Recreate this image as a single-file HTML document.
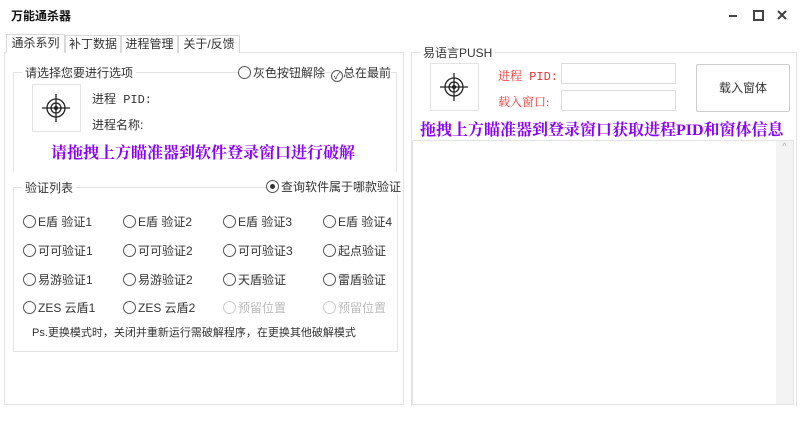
<!DOCTYPE html>
<html><head><meta charset="utf-8"><style>
*{margin:0;padding:0;box-sizing:border-box}
body{width:800px;height:432px;background:#fff;position:relative;overflow:hidden;font-family:"Liberation Sans","Noto Sans CJK SC",sans-serif;font-size:12px;color:#222}
.a{position:absolute;white-space:nowrap}
.box{position:absolute;border:1px solid #e3e3e3}
.tab{position:absolute;top:35px;height:18px;border:1px solid #d9d9d9;border-bottom:none;background:#fff;font-size:12px;line-height:16px;text-align:center;color:#333}
.lg{position:absolute;background:#fff;padding:0 3px;font-size:12px;color:#333}
.r{position:absolute;font-size:12px;color:#333;white-space:nowrap;line-height:14px}
.r:before{content:"";display:inline-block;width:11px;height:11px;border:1px solid #555;border-radius:50%;vertical-align:-2px;margin-right:2px}
.r.d{color:#bbb}.r.d:before{border-color:#ccc}
.p{position:absolute;font-family:"Liberation Serif","Noto Serif CJK SC",serif;font-weight:bold;color:#8a00ff;font-size:16px;white-space:nowrap}
.ic{position:absolute;width:49px;height:48px;border:1px solid #e3e3e3;background:#fff}
.inp{position:absolute;border:1px solid #dcdcdc;background:#fff;width:115px;height:21px}
</style></head><body>
<div class="a" style="left:11px;top:7px;font-weight:bold;font-size:12px;color:#111">万能通杀器</div>
<svg class="a" style="left:727px;top:8px" width="66" height="14"><line x1="2" y1="8" x2="10" y2="8" stroke="#444" stroke-width="2"/><rect x="27" y="3" width="9" height="9" fill="none" stroke="#444" stroke-width="2"/><path d="M51 3L59 11M59 3L51 11" stroke="#444" stroke-width="2"/></svg>
<div class="box" style="left:4px;top:52px;width:400px;height:353px"></div>
<div class="tab" style="left:6px;top:34px;width:59px;height:19px;border-bottom:1px solid #fff">通杀系列</div>
<div class="tab" style="left:65px;width:56px">补丁数据</div>
<div class="tab" style="left:121px;width:57px">进程管理</div>
<div class="tab" style="left:178px;width:62px">关于/反馈</div>
<div class="box" style="left:13px;top:72px;width:384px;height:100px;border-bottom:none"></div>
<div class="lg" style="left:22px;top:64px">请选择您要进行选项</div>
<div class="r" style="left:238px;top:66px;background:#fff">灰色按钮解除</div>
<div class="a" style="left:331px;top:66px;background:#fff;font-size:12px;color:#333;line-height:14px"><span style="display:inline-block;width:12px;height:12px;border:1px solid #555;border-radius:50%;font-size:9px;line-height:10px;text-align:center;vertical-align:-2px">✓</span>总在最前</div>
<div class="ic" style="left:32px;top:84px"><svg width="47" height="46"><g stroke="#222" fill="none" stroke-width="1.3"><circle cx="23" cy="23" r="9"/><circle cx="23" cy="23" r="5"/><circle cx="23" cy="23" r="1.5" fill="#222"/><line x1="9" y1="23" x2="37" y2="23"/><line x1="23" y1="9" x2="23" y2="37"/></g></svg></div>
<div class="a" style="left:92px;top:90px;font-family:'Liberation Mono','Noto Sans CJK SC',monospace;color:#333">进程 PID:</div>
<div class="a" style="left:92px;top:116px;color:#333">进程名称:</div>
<div class="p" style="left:51px;top:140px">请拖拽上方瞄准器到软件登录窗口进行破解</div>
<div class="box" style="left:13px;top:187px;width:385px;height:165px"></div>
<div class="lg" style="left:22px;top:179px">验证列表</div>
<div class="r" style="left:266px;top:180px;background:#fff"><span style="position:absolute;left:4px;top:4px;width:5px;height:5px;border-radius:50%;background:#333"></span>查询软件属于哪款验证</div>
<div class="r" style="left:23px;top:215px">E盾 验证1</div><div class="r" style="left:123px;top:215px">E盾 验证2</div><div class="r" style="left:223px;top:215px">E盾 验证3</div><div class="r" style="left:323px;top:215px">E盾 验证4</div>
<div class="r" style="left:23px;top:244px">可可验证1</div><div class="r" style="left:123px;top:244px">可可验证2</div><div class="r" style="left:223px;top:244px">可可验证3</div><div class="r" style="left:323px;top:244px">起点验证</div>
<div class="r" style="left:23px;top:273px">易游验证1</div><div class="r" style="left:123px;top:273px">易游验证2</div><div class="r" style="left:223px;top:273px">天盾验证</div><div class="r" style="left:323px;top:273px">雷盾验证</div>
<div class="r" style="left:23px;top:301px">ZES 云盾1</div><div class="r" style="left:123px;top:301px">ZES 云盾2</div><div class="r d" style="left:223px;top:301px">预留位置</div><div class="r d" style="left:323px;top:301px">预留位置</div>
<div class="a" style="left:32px;top:324px;font-size:11px;color:#333">Ps.更换模式时，关闭并重新运行需破解程序，在更换其他破解模式</div>
<div class="box" style="left:411px;top:52px;width:386px;height:354px;border-bottom:none"></div>
<div class="lg" style="left:420px;top:44px">易语言PUSH</div>
<div class="ic" style="left:430px;top:63px"><svg width="47" height="46"><g stroke="#222" fill="none" stroke-width="1.3"><circle cx="23" cy="23" r="9"/><circle cx="23" cy="23" r="5"/><circle cx="23" cy="23" r="1.5" fill="#222"/><line x1="9" y1="23" x2="37" y2="23"/><line x1="23" y1="9" x2="23" y2="37"/></g></svg></div>
<div class="a" style="left:498px;top:67px;color:#f03030;font-family:'Liberation Mono','Noto Serif CJK SC',monospace">进程 PID:</div>
<div class="a" style="left:498px;top:93px;color:#f03030;font-family:'Liberation Serif','Noto Serif CJK SC',serif">载入窗口:</div>
<div class="inp" style="left:561px;top:63px"></div>
<div class="inp" style="left:561px;top:90px"></div>
<div class="a" style="left:696px;top:64px;width:94px;height:48px;border:1px solid #cfcfcf;border-radius:2px;text-align:center;line-height:46px;color:#333">载入窗体</div>
<div class="p" style="left:420px;top:117px">拖拽上方瞄准器到登录窗口获取进程PID和窗体信息</div>
<div class="box" style="left:412px;top:140px;width:382px;height:265px"></div>
<div class="a" style="left:776px;top:141px;width:17px;height:263px;background:#f3f3f3;color:#aaa;font-size:9px;text-align:center">^</div>
</body></html>
